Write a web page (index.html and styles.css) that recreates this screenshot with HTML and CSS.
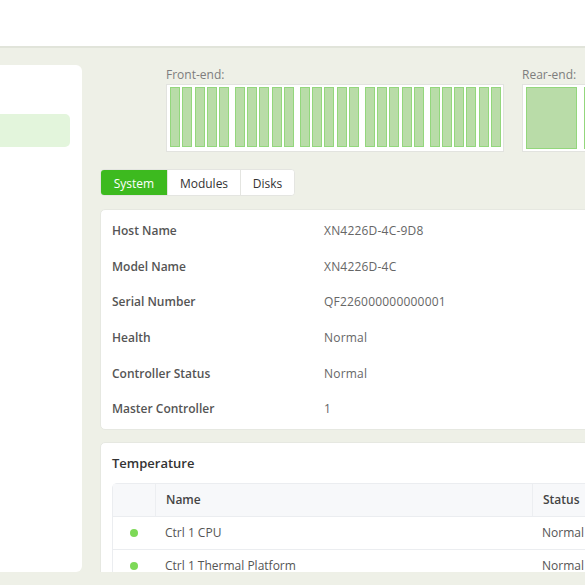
FILE: index.html
```html
<!DOCTYPE html>
<html lang="en">
<head>
    <meta charset="UTF-8">
    <meta name="viewport" content="width=device-width, initial-scale=1.0">
    <title>Storage</title>
    <link rel="stylesheet" href="styles.css">
</head>
<body>
    <header class="topbar"></header>

    <main class="main">
        <div class="frame">
            <aside class="sidebar">
                <div class="side-item"></div>
            </aside>

            <section class="content">
                <div class="enclosure">
                    <div class="enc-block">
                        <div class="enc-label">Front-end:</div>
                        <div class="enc-box front">
                            <div class="slot-group">
                                <span class="slot"></span><span class="slot"></span><span class="slot"></span><span class="slot"></span><span class="slot"></span>
                            </div>
                            <div class="slot-group">
                                <span class="slot"></span><span class="slot"></span><span class="slot"></span><span class="slot"></span><span class="slot"></span>
                            </div>
                            <div class="slot-group">
                                <span class="slot"></span><span class="slot"></span><span class="slot"></span><span class="slot"></span><span class="slot"></span>
                            </div>
                            <div class="slot-group">
                                <span class="slot"></span><span class="slot"></span><span class="slot"></span><span class="slot"></span><span class="slot"></span>
                            </div>
                            <div class="slot-group">
                                <span class="slot"></span><span class="slot"></span><span class="slot"></span><span class="slot"></span><span class="slot"></span><span class="slot"></span>
                            </div>
                        </div>
                    </div>
                    <div class="enc-block">
                        <div class="enc-label">Rear-end:</div>
                        <div class="enc-box rear">
                            <span class="module"></span>
                            <span class="module"></span>
                        </div>
                    </div>
                </div>

                <div class="tabs">
                    <button class="tab active">System</button>
                    <button class="tab">Modules</button>
                    <button class="tab">Disks</button>
                </div>

                <div class="card info">
                    <div class="row"><span class="key">Host Name</span><span class="val">XN4226D-4C-9D8</span></div>
                    <div class="row"><span class="key">Model Name</span><span class="val">XN4226D-4C</span></div>
                    <div class="row"><span class="key">Serial Number</span><span class="val">QF226000000000001</span></div>
                    <div class="row"><span class="key">Health</span><span class="val">Normal</span></div>
                    <div class="row"><span class="key">Controller Status</span><span class="val">Normal</span></div>
                    <div class="row"><span class="key">Master Controller</span><span class="val">1</span></div>
                </div>

                <div class="card temp">
                    <h3>Temperature</h3>
                    <table class="table">
                        <thead>
                            <tr><th class="c-dot"></th><th class="c-name">Name</th><th>Status</th></tr>
                        </thead>
                        <tbody>
                            <tr><td class="c-dot"><span class="dot"></span></td><td>Ctrl 1 CPU</td><td>Normal</td></tr>
                            <tr><td class="c-dot"><span class="dot"></span></td><td>Ctrl 1 Thermal Platform</td><td>Normal</td></tr>
                        </tbody>
                    </table>
                </div>
            </section>
        </div>
    </main>
</body>
</html>
```

FILE: styles.css
```css
* {
    box-sizing: border-box;
}
html, body {
    margin: 0;
    height: 100%;
    overflow: hidden;
}
body {
    font-family: "Open Sans", "Noto Sans", Arial, sans-serif;
    background: #eef0e7;
    color: #333;
}
.topbar {
    height: 48px;
    background: #fff;
    border-bottom: 2px solid #e1e4da;
}
.main {
    height: 537px;
    padding: 17px 0 13px 0;
}
.frame {
    display: flex;
    height: 507px;
    overflow: hidden;
}
.sidebar {
    flex: 0 0 82px;
    background: #fff;
    border-radius: 0 6px 6px 0;
    padding-top: 49px;
}
.side-item {
    width: 70px;
    height: 33px;
    background: #e3f5dc;
    border-radius: 0 5px 5px 0;
}
.content {
    flex: 0 0 640px;
    margin-left: 18px;
}

/* enclosure */
.enclosure {
    display: flex;
    gap: 18px;
    padding-left: 66px;
}
.enc-label {
    font-size: 12px;
    color: #7d7d7d;
    height: 19px;
    line-height: 19px;
}
.enc-box {
    display: flex;
    background: #fff;
    border: 1px solid #e2e3df;
    height: 68px;
    padding: 2px 3px;
}
.front {
    width: 338px;
    gap: 5.7px;
}
.slot-group {
    display: flex;
    gap: 2.3px;
}
.slot {
    width: 10px;
    height: 60px;
    background: #b9dca8;
    border: 1px solid #93d77c;
}
.rear {
    gap: 7px;
}
.module {
    width: 51px;
    height: 62px;
    background: #b9dca8;
    border: 1px solid #93d77c;
}

/* tabs */
.tabs {
    display: flex;
    margin-top: 17px;
    width: 195px;
    height: 27px;
    background: #fff;
    border: 1px solid #e4e5e1;
    border-radius: 4px;
    overflow: hidden;
}
.tab {
    font-family: inherit;
    font-size: 12px;
    color: #333;
    background: #fff;
    border: none;
    border-left: 1px solid #e4e5e1;
    padding: 1px 0 0 0;
    cursor: pointer;
}
.tab:nth-child(1) { width: 66px; border-left: none; }
.tab:nth-child(2) { width: 73px; }
.tab:nth-child(3) { flex: 1; }
.tab.active {
    background: #3dba1f;
    color: #fff;
}

/* cards */
.card {
    background: #fff;
    border: 1px solid #e6e8e1;
    border-radius: 5px;
}
.info {
    margin-top: 13px;
    padding: 3px 0 2px 0;
}
.row {
    display: flex;
    height: 35.6px;
    align-items: center;
    font-size: 12px;
}
.key {
    width: 223px;
    padding-left: 11px;
    font-weight: 600;
    color: #555;
}
.val {
    color: #666;
    letter-spacing: 0.2px;
}
.temp {
    margin-top: 12px;
    padding: 10px 11px;
    height: 200px;
}
.temp h3 {
    margin: 1px 0 11px 0;
    font-size: 13px;
    font-weight: 600;
    color: #333;
}
.table {
    width: 100%;
    border-collapse: separate;
    border-spacing: 0;
    font-size: 12px;
    border: 1px solid #ebedf0;
    border-radius: 5px;
}
.table th {
    height: 33px;
    background: #f7f8fa;
    text-align: left;
    font-weight: 600;
    color: #444;
    padding: 0 10px;
    border-left: 1px solid #eceef1;
    border-bottom: 1px solid #ebedf0;
}
.table th:first-child {
    border-left: none;
}
.table th.c-dot {
    width: 42px;
}
.table th.c-name {
    width: 377px;
}
.table td {
    height: 33px;
    padding: 0 10px;
    color: #555;
    border-bottom: 1px solid #ebedf0;
}
.table td.c-dot {
    text-align: center;
    padding: 0;
}
.dot {
    display: inline-block;
    width: 8px;
    height: 8px;
    border-radius: 50%;
    background: #7dd957;
}
```
